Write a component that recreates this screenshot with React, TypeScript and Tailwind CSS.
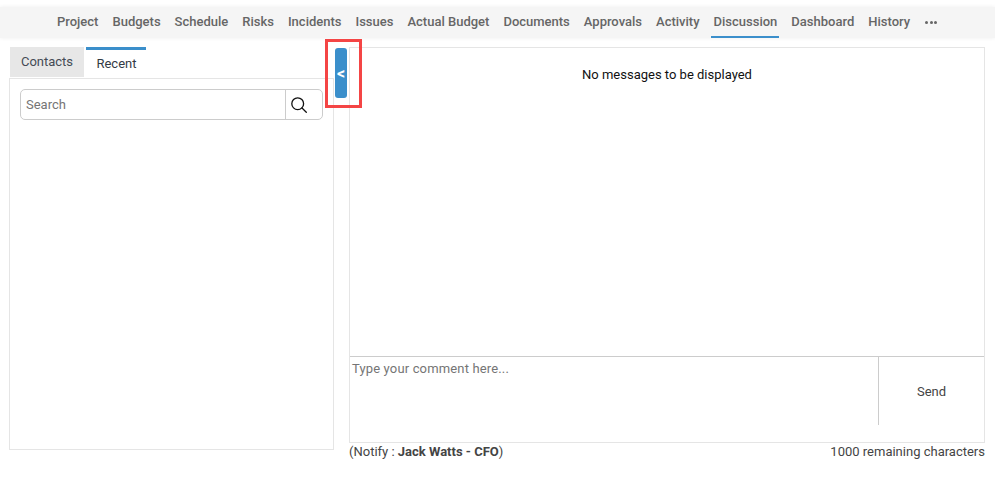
const tabs = ['Project', 'Budgets', 'Schedule', 'Risks', 'Incidents', 'Issues', 'Actual Budget', 'Documents', 'Approvals', 'Activity', 'Discussion', 'Dashboard', 'History'];

function TopNav() {
    return (
        <nav className="mt-[7px] h-[31px] bg-[#f5f5f5] shadow-[0_0_4px_rgba(0,0,0,0.07)] flex items-stretch pl-[55px] gap-[10px]">
            {tabs.map((tab) => (
                <div
                    key={tab}
                    className={`flex items-center text-[13px] font-medium text-[#666666] border-b-2 ${tab === 'Discussion' ? 'border-[#3b8fcb] -ml-px pl-[3px] pr-[2px]' : 'border-transparent px-[2px]'}`}
                >
                    {tab}
                </div>
            ))}
            <div className="ml-[3px] flex items-center gap-[1.5px] pb-[1px]">
                <span className="w-[3px] h-[3px] rounded-full bg-[#666666]"></span>
                <span className="w-[3px] h-[3px] rounded-full bg-[#666666]"></span>
                <span className="w-[3px] h-[3px] rounded-full bg-[#666666]"></span>
            </div>
        </nav>
    );
}

function ContactsPanel() {
    return (
        <div className="w-[325px] h-[403px] flex flex-col">
            <div className="flex h-[31px] pl-px gap-[2px]">
                <div className="w-[74px] h-[30px] bg-[#e7e7e7] flex items-center justify-center text-[13px] text-[#444b55]">Contacts</div>
                <div className="w-[60px] border-t-[3px] border-[#3b8fcb] flex items-center justify-center pb-[1px] pl-px text-[13px] text-[#333a45]">Recent</div>
            </div>
            <div className="flex-1 border border-[#e5e5e5] p-[10px]">
                <div className="h-[31px] border border-[#cccccc] rounded-[5px] flex">
                    <div className="flex-1 pl-[5px] flex items-center text-[13px] text-[#757575]">Search</div>
                    <div className="w-[37px] border-l border-[#cccccc] flex items-center pl-[5px]">
                        <svg width="16" height="16" viewBox="0 0 16 16" fill="none" stroke="#111111" strokeWidth="1.3">
                            <circle cx="6.7" cy="6.7" r="5.9" />
                            <path d="M11 11L15.3 15.3" strokeLinecap="round" />
                        </svg>
                    </div>
                </div>
            </div>
        </div>
    );
}

function DiscussionPanel() {
    return (
        <div className="w-[636px] flex flex-col">
            <div className="h-[396px] border border-[#e5e5e5] flex flex-col">
                <div className="h-[308px] pt-[18px] text-center text-[13px] leading-[18px] text-[#111111]">No messages to be displayed</div>
                <div className="flex h-[69px] border-t border-[#cccccc]">
                    <div className="flex-1 pl-[2px] pt-[3px] text-[13px] leading-[18px] tracking-[0.15px] text-[#757575]">Type your comment here...</div>
                    <div className="w-[106px] border-l border-[#cccccc] flex items-center justify-center pt-[2px] text-[13px] text-[#444444]">Send</div>
                </div>
            </div>
            <div className="flex justify-between text-[13px] leading-[18px] text-[#444444]">
                <span>(Notify : <b className="font-bold">Jack Watts - CFO</b>)</span>
                <span>1000 remaining characters</span>
            </div>
        </div>
    );
}

export default function App() {
    return (
        <div className="w-[995px] h-[488px] bg-white overflow-hidden font-['Roboto',sans-serif]">
            <TopNav />
            <div className="flex pl-[9px] pt-[9px]">
                <ContactsPanel />
                <div className="w-[15px] pl-px relative">
                    <div className="mt-px w-3 h-[50px] bg-[#3b8fcb] rounded-[3px] flex items-center justify-center pt-[1px] text-[16px] leading-none font-bold text-white">&lt;</div>
                    <div className="absolute left-[-9px] top-[-8px] w-[37px] h-[69px] border-[3px] border-[#f44545]"></div>
                </div>
                <DiscussionPanel />
            </div>
        </div>
    );
}
